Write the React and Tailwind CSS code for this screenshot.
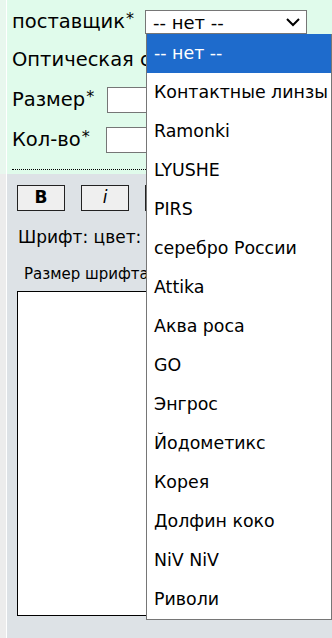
import React from 'react';

const suppliers = [
  '-- нет --',
  'Контактные линзы',
  'Ramonki',
  'LYUSHE',
  'PIRS',
  'серебро России',
  'Attika',
  'Аква роса',
  'GO',
  'Энгрос',
  'Йодометикс',
  'Корея',
  'Долфин коко',
  'NiV NiV',
  'Риволи',
];

const Star = () => <sup className="text-[16px] relative -top-[4px] ml-[1px]">*</sup>;

const App = () => {
  return (
    <div className="w-[332px] h-[638px] relative overflow-hidden flex bg-white font-['DejaVu_Sans',sans-serif] text-black">
      <div className="w-[6px] flex flex-col">
        <div className="h-[174px] bg-[#e8f7ee]" />
        <div className="flex-1 bg-[#ececec]" />
      </div>
      <div className="w-[1px] bg-white" />

      <div className="flex-1 flex flex-col">
        <div className="h-[174px] bg-[#e0fbeb] pl-[5px] pt-[8px] flex flex-col">
          <div className="flex items-center h-[28px] text-[19.5px]">
            <span className="w-[133px] whitespace-nowrap">поставщик<Star /></span>
            <div className="w-[162px] h-[24px] shrink-0 border border-[#767676] bg-white flex items-center justify-between pl-[7px] pr-[6px] text-[18px]">
              <span>-- нет --</span>
              <svg width="14" height="9" viewBox="0 0 14 9" fill="none" stroke="black" strokeWidth="2">
                <path d="M1 1l6 6 6-6" />
              </svg>
            </div>
          </div>
          <div className="mt-[4px] h-[40px] flex items-center text-[19.5px] whitespace-nowrap">Оптическая сила</div>
          <div className="flex items-center h-[40px] text-[19.5px]">
            <span className="w-[95px] whitespace-nowrap">Размер<Star /></span>
            <div className="w-[100px] h-[26px] shrink-0 border border-[#767676] bg-white" />
          </div>
          <div className="flex items-center h-[40px] text-[19.5px]">
            <span className="w-[94px] whitespace-nowrap">Кол-во<Star /></span>
            <div className="w-[100px] h-[26px] shrink-0 border border-[#767676] bg-white" />
          </div>
          <div className="mt-[9px] border-t border-dotted border-black" />
        </div>

        <div className="flex-1 bg-[#dde2e6] pl-[10px] pt-[11px] flex flex-col">
          <div className="flex gap-[16px]">
            <div className="w-[48px] h-[26px] border border-[#222] bg-[#efefef] flex items-center justify-center text-[17px] font-bold">B</div>
            <div className="w-[48px] h-[26px] border border-[#222] bg-[#efefef] flex items-center justify-center text-[17px] italic">i</div>
            <div className="w-[48px] h-[26px] border border-[#222] bg-[#efefef] flex items-center justify-center text-[17px] underline">U</div>
          </div>
          <div className="mt-[14px] pl-[1px] text-[17px] whitespace-nowrap">Шрифт: цвет:</div>
          <div className="mt-[12px] pl-[7px] text-[15px] whitespace-nowrap">Размер шрифта</div>
          <div className="mt-[6px] w-[300px] h-[325px] border border-black bg-white" />
        </div>
      </div>

      <div className="absolute left-[146px] top-[34px] w-[186px] border border-[#767676] border-t-0 bg-white text-[17.4px]">
        {suppliers.map((name, i) => (
          <div
            key={name}
            className={
              i === 0
                ? 'h-[39px] flex items-center pl-[7px] bg-[#1e6bcc] text-white whitespace-nowrap'
                : 'h-[39px] flex items-center pl-[7px] whitespace-nowrap'
            }
          >
            {name}
          </div>
        ))}
      </div>
    </div>
  );
};

export default App;
